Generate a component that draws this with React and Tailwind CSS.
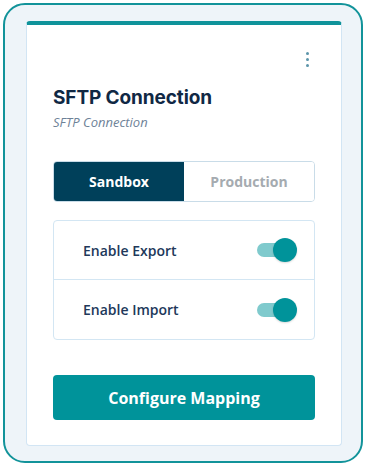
import React, { useState } from 'react';

const Toggle = ({ on, onChange }) => (
  <button
    type="button"
    onClick={onChange}
    className="relative w-[40px] h-[24px] flex items-center"
  >
    <span className={`block w-[38px] h-[14px] rounded-full ${on ? 'bg-[#7fcacd]' : 'bg-[#cbd5e1]'}`} />
    <span
      className={`absolute top-0 w-[24px] h-[24px] rounded-full shadow-[0_1px_2px_rgba(0,0,0,0.15)] ${on ? 'right-0 bg-[#00939a]' : 'left-0 bg-white'}`}
    />
  </button>
);

const App = () => {
  const [env, setEnv] = useState('sandbox');
  const [exportOn, setExportOn] = useState(true);
  const [importOn, setImportOn] = useState(true);

  return (
    <div className="w-[370px] h-[468px] bg-white p-[3px] font-['Open_Sans',sans-serif]">
      <div className="w-[360px] h-[460px] rounded-[22px] border-2 border-[#12939a] bg-[#eef4f9] pl-[21px] pr-[19px] pt-4 pb-[15px]">
        <div className="h-full flex flex-col bg-white border border-[#d2e5f4] border-t-4 border-t-[#0f939a] rounded-[4px] px-[26px]">
          <div className="flex justify-end pt-[27px] pr-[6px]">
            <button type="button" className="flex flex-col gap-[3px]">
              <span className="w-[3px] h-[3px] rounded-full bg-[#5c95aa]" />
              <span className="w-[3px] h-[3px] rounded-full bg-[#5c95aa]" />
              <span className="w-[3px] h-[3px] rounded-full bg-[#5c95aa]" />
            </button>
          </div>

          <h2 className="mt-[19px] text-[19px] leading-6 font-bold text-[#102844] font-['Inter',sans-serif] tracking-[-0.1px]">
            SFTP Connection
          </h2>
          <p className="mt-[4px] text-[13px] leading-4 italic text-[#6e8297]">SFTP Connection</p>

          <div className="mt-[31px] flex h-[41px] rounded-[4px] border border-[#c9dce8] overflow-hidden">
            <button
              type="button"
              onClick={() => setEnv('sandbox')}
              className={`w-[130px] text-[14px] font-bold ${env === 'sandbox' ? 'bg-[#00405a] text-white' : 'bg-white text-[#a5abb0]'}`}
            >
              Sandbox
            </button>
            <button
              type="button"
              onClick={() => setEnv('production')}
              className={`flex-1 text-[14px] font-bold ${env === 'production' ? 'bg-[#00405a] text-white' : 'bg-white text-[#a5abb0]'}`}
            >
              Production
            </button>
          </div>

          <div className="mt-[18px] rounded-[4px] border border-[#d3e6f3]">
            <div className="flex items-center justify-between h-[59px] pl-[29px] pr-[17px] border-b border-[#d3e6f3]">
              <span className="text-[14px] font-semibold text-[#21385a]">Enable Export</span>
              <Toggle on={exportOn} onChange={() => setExportOn(!exportOn)} />
            </div>
            <div className="flex items-center justify-between h-[59px] pl-[29px] pr-[17px]">
              <span className="text-[14px] font-semibold text-[#21385a]">Enable Import</span>
              <Toggle on={importOn} onChange={() => setImportOn(!importOn)} />
            </div>
          </div>

          <button
            type="button"
            className="mt-[35px] h-[45px] rounded-[4px] bg-[#00939a] text-white text-[16px] font-bold"
          >
            Configure Mapping
          </button>
        </div>
      </div>
    </div>
  );
};

export default App;
